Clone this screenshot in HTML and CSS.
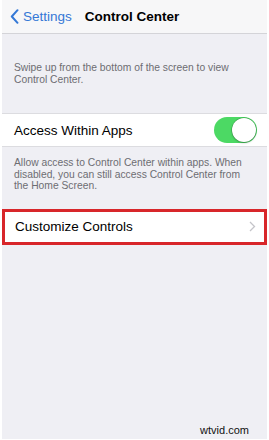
FILE: index.html
```html
<!DOCTYPE html>
<html>
<head>
<meta charset="utf-8">
<link rel="stylesheet" href="styles.css">
</head>
<body>
<div class="screen">
  <header class="nav">
    <div class="back">
      <svg class="back-icon" width="9" height="15" viewBox="0 0 9 15"><path d="M7.5 1.2 L1.8 7.5 L7.5 13.8" fill="none" stroke="#3478d6" stroke-width="2" stroke-linecap="round" stroke-linejoin="round"/></svg>
      <span>Settings</span>
    </div>
    <div class="title">Control Center</div>
  </header>
  <p class="note first">Swipe up from the bottom of the screen to view Control Center.</p>
  <div class="row">
    <span class="label">Access Within Apps</span>
    <span class="toggle"><span class="knob"></span></span>
  </div>
  <p class="note second">Allow access to Control Center within apps. When disabled, you can still access Control Center from the Home Screen.</p>
  <div class="row highlighted">
    <span class="label">Customize Controls</span>
    <svg class="chev" width="7" height="11" viewBox="0 0 7 11"><path d="M1 1 L5.5 5.5 L1 10" fill="none" stroke="#c4c4c9" stroke-width="1.3"/></svg>
  </div>
  <div class="spacer"></div>
  <div class="watermark">wtvid.com</div>
</div>
</body>
</html>
```
FILE: styles.css
```css
html, body { margin: 0; padding: 0; background: #ffffff; }
body { width: 269px; height: 440px; font-family: "Liberation Sans", Arial, sans-serif; }
.screen {
  margin: 0 2px;
  height: 439px;
  background: #efeff4;
  display: flex;
  flex-direction: column;
}
.nav {
  height: 33px;
  background: #f7f7f8;
  border-bottom: 1px solid #d4d4d8;
  display: flex;
  align-items: center;
  padding-left: 8px;
}
.back { display: flex; align-items: center; gap: 4px; color: #3478d6; font-size: 13.5px; }
.back-icon { display: block; }
.title { margin-left: 13px; font-size: 13.5px; font-weight: bold; color: #000; }
.note {
  margin: 0;
  padding: 0 12px;
  font-size: 10.3px;
  line-height: 11.5px;
  color: #6d6d72;
}
.note.first { margin-top: 28px; margin-bottom: 28px; }
.note.second { margin-top: 10px; margin-bottom: 17px; }
.row {
  height: 34px;
  background: #fff;
  border-top: 1px solid #dcdce0;
  border-bottom: 1px solid #dcdce0;
  display: flex;
  align-items: center;
  justify-content: space-between;
  padding: 0 10px 0 12px;
  box-sizing: border-box;
}
.label { font-size: 13.5px; color: #000; }
.toggle {
  width: 43px;
  height: 26px;
  border-radius: 13px;
  background: #4cd964;
  position: relative;
  box-sizing: border-box;
}
.knob {
  position: absolute;
  right: 1px;
  top: 1px;
  width: 24px;
  height: 24px;
  border-radius: 50%;
  background: #fff;
  box-shadow: 0 0 0 0.5px rgba(0,0,0,0.25), 0 1px 2px rgba(0,0,0,0.25);
}
.highlighted {
  height: 36px;
  border: 3px solid #d8262a;
  padding: 0 8px 0 10px;
}
.chev { display: block; }
.spacer { flex: 1; }
.watermark {
  align-self: flex-end;
  margin: 0 18px 3px 0;
  font-size: 11px;
  color: #111;
  font-family: "Liberation Sans", Arial, sans-serif;
}
```
